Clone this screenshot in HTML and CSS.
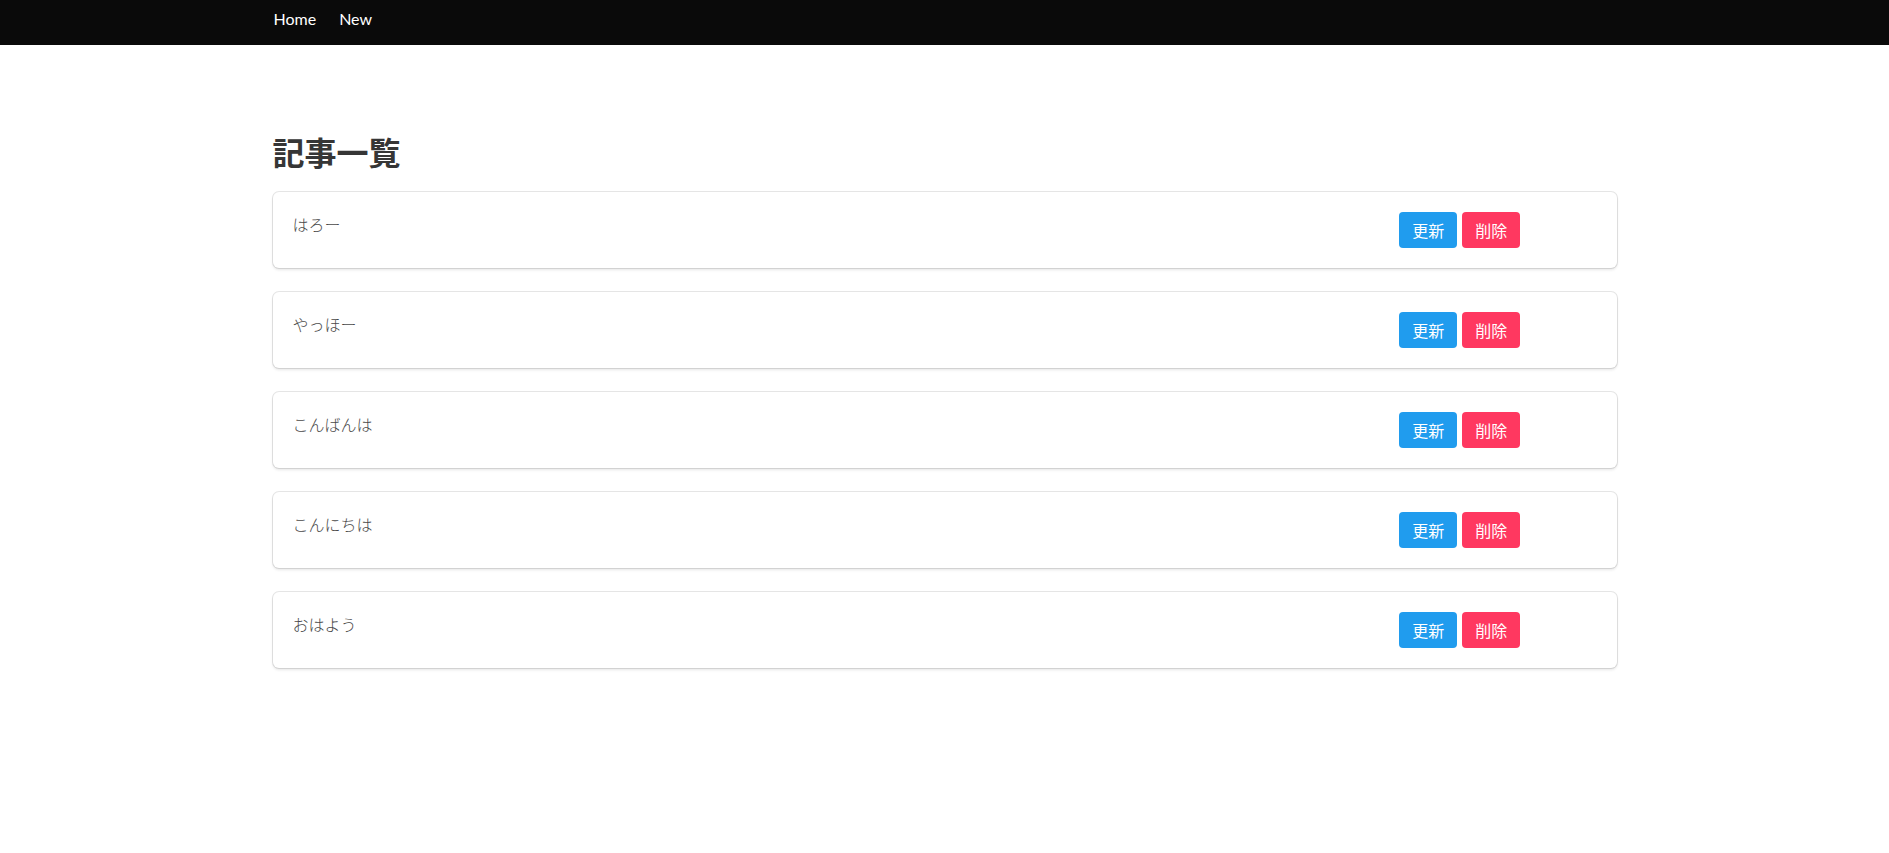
FILE: index.html
```html
<!DOCTYPE html>
<html lang="ja">
<head>
    <meta charset="UTF-8">
    <meta name="viewport" content="width=device-width, initial-scale=1.0">
    <title>記事一覧</title>
    <link rel="stylesheet" href="styles.css">
</head>
<body>

    <nav class="navbar">
        <div class="container navbar-menu">
            <a class="navbar-item" href="#">Home</a>
            <a class="navbar-item" href="#">New</a>
        </div>
    </nav>

    <section class="section">
        <div class="container">
            <h1 class="title">記事一覧</h1>

            <div class="box">
                <div class="columns">
                    <div class="column is-10">はろー</div>
                    <div class="column buttons">
                        <a class="button is-info" href="#">更新</a>
                        <a class="button is-danger" href="#">削除</a>
                    </div>
                </div>
            </div>

            <div class="box">
                <div class="columns">
                    <div class="column is-10">やっほー</div>
                    <div class="column buttons">
                        <a class="button is-info" href="#">更新</a>
                        <a class="button is-danger" href="#">削除</a>
                    </div>
                </div>
            </div>

            <div class="box">
                <div class="columns">
                    <div class="column is-10">こんばんは</div>
                    <div class="column buttons">
                        <a class="button is-info" href="#">更新</a>
                        <a class="button is-danger" href="#">削除</a>
                    </div>
                </div>
            </div>

            <div class="box">
                <div class="columns">
                    <div class="column is-10">こんにちは</div>
                    <div class="column buttons">
                        <a class="button is-info" href="#">更新</a>
                        <a class="button is-danger" href="#">削除</a>
                    </div>
                </div>
            </div>

            <div class="box">
                <div class="columns">
                    <div class="column is-10">おはよう</div>
                    <div class="column buttons">
                        <a class="button is-info" href="#">更新</a>
                        <a class="button is-danger" href="#">削除</a>
                    </div>
                </div>
            </div>
        </div>
    </section>

</body>
</html>
```

FILE: styles.css
```css
body {
    margin: 0;
    font-family: Lato, "Noto Sans CJK JP", sans-serif;
    font-size: 16px;
    line-height: 1.5;
    color: #4a4a4a;
    background: #fff;
}
.container {
    max-width: 1344px;
    margin: 0 auto;
}
.navbar {
    background-color: #0a0a0a;
    height: 45px;
}
.navbar-menu {
    display: flex;
    gap: 22px;
    padding-top: 7px;
}
.navbar-item {
    color: #fff;
    text-decoration: none;
    padding-left: 1px;
}
.section {
    padding-top: 88px;
    padding-bottom: 48px;
}
.title {
    margin: 0 0 23px;
    font-family: "Noto Sans CJK JP", sans-serif;
    font-size: 32px;
    font-weight: 700;
    line-height: 1.125;
    color: #363636;
}
.box {
    background: #fff;
    border-radius: 6px;
    box-shadow: 0 2px 3px rgba(10, 10, 10, 0.1), 0 0 0 1px rgba(10, 10, 10, 0.1);
    padding: 20px;
    margin-bottom: 24px;
}
.columns {
    display: flex;
    margin: -12px;
}
.column {
    padding: 12px;
    flex: 1 1 0;
    font-family: "Noto Sans CJK JP", sans-serif;
    font-weight: 300;
}
.column.is-10 {
    flex: none;
    width: 83.3333%;
    box-sizing: border-box;
}
.buttons {
    display: flex;
    align-items: flex-start;
    gap: 5px;
}
.button {
    display: inline-block;
    height: 36px;
    box-sizing: border-box;
    padding: 5px 12px;
    border: 1px solid transparent;
    border-radius: 4px;
    color: #fff;
    text-decoration: none;
    font-size: 16px;
    font-weight: 400;
    line-height: 24px;
    white-space: nowrap;
}
.button.is-info {
    background-color: #209cee;
}
.button.is-danger {
    background-color: #ff3860;
}
```
